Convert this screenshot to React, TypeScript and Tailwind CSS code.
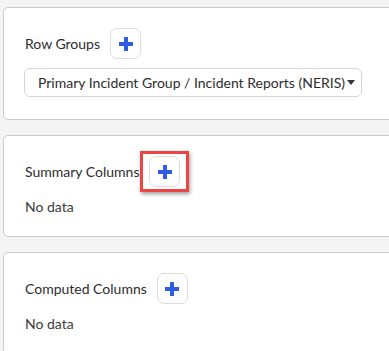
import React from 'react';

const PlusButton = ({ highlighted = false }: { highlighted?: boolean }) => {
  const btn = (
    <button
      type="button"
      className="flex h-[31px] w-[31px] items-center justify-center rounded-[7px] border border-[#dcdcdc] bg-white"
    >
      <svg width="16" height="16" viewBox="0 0 16 16" aria-hidden="true">
        <path d="M8 1v14M1 8h14" stroke="#2e5ce6" strokeWidth="4" />
      </svg>
    </button>
  );
  if (!highlighted) return btn;
  return (
    <div className="-mx-[9px] -my-[5px] border-[3px] border-[#ef4444] px-[6px] py-[2px] shadow-[1px_2px_4px_rgba(0,0,0,0.4)]">
      {btn}
    </div>
  );
};

const Section = ({
  title,
  highlighted,
  className = '',
  children,
}: {
  title: string;
  highlighted?: boolean;
  className?: string;
  children: React.ReactNode;
}) => (
  <section className={`-mr-4 shrink-0 rounded-[5px] border border-[#c9c9d1] bg-white pt-[20px] pl-[21px] ${className}`}>
    <div className="flex items-center gap-[10px]">
      <span className="text-[14px] text-[#2d2d2d]">{title}</span>
      <PlusButton highlighted={highlighted} />
    </div>
    {children}
  </section>
);

export default function App() {
  return (
    <div
      className="flex h-[351px] flex-col gap-[15px] overflow-hidden bg-[#f4f4f5] pt-[7px] pl-[3px]"
      style={{ fontFamily: 'Lato, "Noto Sans", sans-serif' }}
    >
      <Section title="Row Groups" className="pb-[22px]">
        <div className="mt-[9px] -ml-[1px] flex h-[29px] w-[338px] items-center rounded-[6px] border border-[#d6d6d6] bg-white pl-[13px] pr-[6px]">
          <span className="flex-1 text-[14px] text-[#2d2d2d]">
            Primary Incident Group / Incident Reports (NERIS)
          </span>
          <svg width="8" height="5" viewBox="0 0 8 5" aria-hidden="true">
            <path d="M0 0h8L4 5z" fill="#333" />
          </svg>
        </div>
      </Section>
      <Section title="Summary Columns" highlighted className="pb-[19px]">
        <p className="mt-[10px] text-[14px] leading-[20px] text-[#3a3a3a]">No data</p>
      </Section>
      <Section title="Computed Columns" className="pb-[19px]">
        <p className="mt-[10px] text-[14px] leading-[20px] text-[#3a3a3a]">No data</p>
      </Section>
    </div>
  );
}
